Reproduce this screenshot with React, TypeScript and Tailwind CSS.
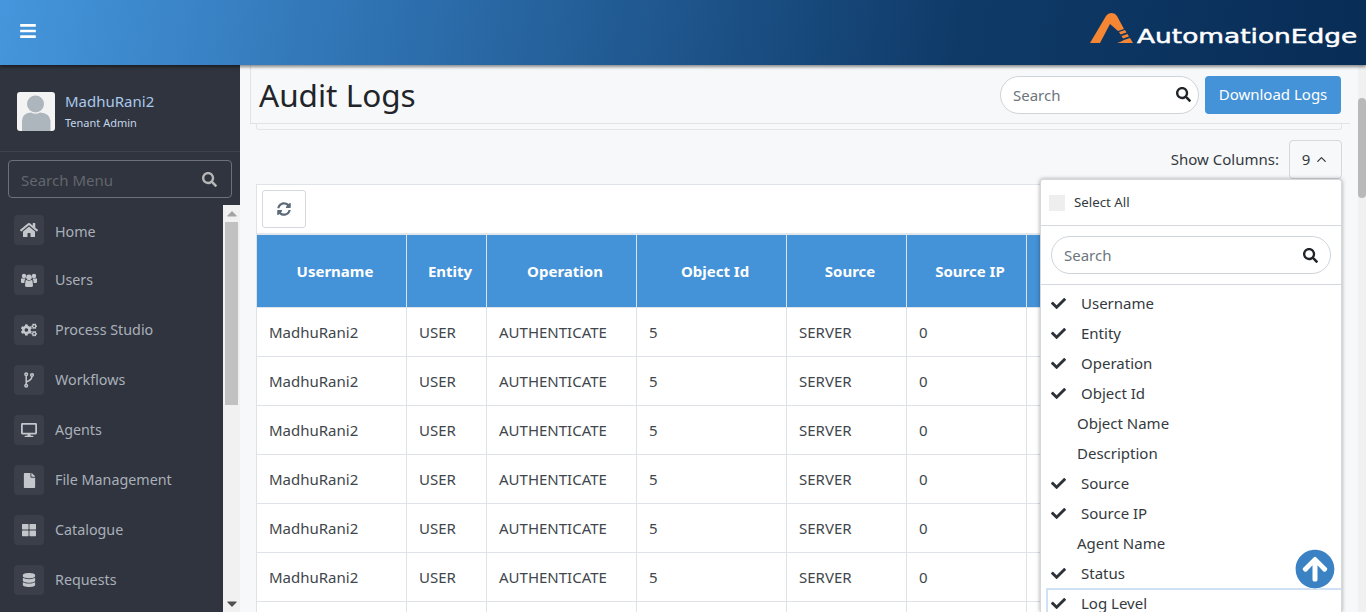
import React from "react";
import { FaHome, FaCogs, FaDesktop, FaFile, FaThLarge, FaDatabase, FaSearch, FaCheck, FaSyncAlt, FaBars, FaArrowCircleUp, FaCaretUp, FaCaretDown } from "react-icons/fa";
import { FiChevronUp } from "react-icons/fi";

const font = { fontFamily: '"Noto Sans", "Open Sans", sans-serif' };

function UsersIcon({ className }: { className?: string }) {
  return (
    <svg viewBox="0 0 16 14" width="16" height="14" className={className} fill="currentColor">
      <circle cx="3" cy="3" r="2.2" />
      <circle cx="13" cy="3" r="2.2" />
      <path d="M0 6 Q0 5 1.5 5.4 L4.5 5.4 Q3 8 3.5 10 L1 10 Q0 10 0 9 Z" />
      <path d="M16 6 Q16 5 14.5 5.4 L11.5 5.4 Q13 8 12.5 10 L15 10 Q16 10 16 9 Z" />
      <circle cx="8" cy="4.2" r="2.8" />
      <path d="M4.5 8 Q4.5 7 5.5 7 Q8 8.6 10.5 7 Q11.5 7 11.5 8 L12 12.5 Q12 14 10 14 L6 14 Q4 14 4 12.5 Z" />
    </svg>
  );
}

function BranchIcon({ className }: { className?: string }) {
  return (
    <svg viewBox="0 0 10 16" width="10" height="16" className={className} fill="none" stroke="currentColor" strokeWidth="1.5">
      <circle cx="2.2" cy="2.2" r="1.3" />
      <circle cx="2.2" cy="13.8" r="1.3" />
      <circle cx="8" cy="3" r="1.3" />
      <path d="M2.2 3.5 V12.5 M8 4.3 Q8 8 2.2 10" />
    </svg>
  );
}

const menu: [string, React.ComponentType<{ className?: string }>, string][] = [
  ["Home", FaHome, "text-[18px]"],
  ["Users", UsersIcon, ""],
  ["Process Studio", FaCogs, "text-[16px]"],
  ["Workflows", BranchIcon, ""],
  ["Agents", FaDesktop, "text-[16px]"],
  ["File Management", FaFile, "text-[15px]"],
  ["Catalogue", FaThLarge, "text-[14px]"],
  ["Requests", FaDatabase, "text-[14px]"],
];

const cols: [string, string][] = [
  ["Username", "w-[150px]"],
  ["Entity", "w-[80px]"],
  ["Operation", "w-[150px]"],
  ["Object Id", "w-[150px]"],
  ["Source", "w-[120px]"],
  ["Source IP", "w-[120px]"],
  ["", "flex-1"],
];

const row = ["MadhuRani2", "USER", "AUTHENTICATE", "5", "SERVER", "0", ""];

const items: [string, boolean][] = [
  ["Username", true],
  ["Entity", true],
  ["Operation", true],
  ["Object Id", true],
  ["Object Name", false],
  ["Description", false],
  ["Source", true],
  ["Source IP", true],
  ["Agent Name", false],
  ["Status", true],
  ["Log Level", true],
];

function Logo() {
  return (
    <div className="flex items-end pb-[8px]">
      <svg width="43" height="30" viewBox="0 0 43 30" className="mb-[1px]">
        <path d="M0 30 L16 3 Q18 0 22 0 Q25 0 27 3 L34 16 L28 18 L20 11 L10 30 Z" fill="#f58634" />
        <path d="M29 19 L35 17 L36.5 19.5 L30.5 21.5 Z M31.5 23 L37.5 21 L39 23.5 L33 25.5 Z M34 27 L40 25 L43 30 L27 30 Q31 29 34 27 Z" fill="#f58634" />
      </svg>
      <span className="ml-[4px] w-[219px] inline-block origin-left scale-x-[1.32] text-white text-[20px] leading-[20px] font-normal whitespace-nowrap mb-[-1.5px] [-webkit-text-stroke:0.5px_white]" style={{ fontFamily: '"DejaVu Sans", sans-serif' }}>
        AutomationEdge
      </span>
    </div>
  );
}

function SearchPill({ className }: { className: string }) {
  return (
    <div className={`flex items-center justify-between rounded-full border border-[#ced4da] bg-white pl-3 h-[38px] ${className}`}>
      <span className="text-[15px] text-[#6c757d] pt-[1px]">Search</span>
      <FaSearch className="text-[15px] text-[#212529]" />
    </div>
  );
}

export default function App() {
  return (
    <div className="h-[612px] w-[1366px] overflow-hidden flex flex-col bg-[#f7f8fa] text-[#212529] relative" style={font}>
      <header className="h-[65px] shrink-0 flex items-center justify-between pl-[19px] pr-[10px] shadow-[0_2px_3px_rgba(0,0,0,0.45)] relative z-20 bg-[linear-gradient(100deg,#4596dc_0%,#2d6fae_30%,#0f3a68_70%,#082d56_100%)]">
        <FaBars className="text-white text-[18px] mt-[-4px]" />
        <Logo />
      </header>

      <div className="flex flex-1 min-h-0">
        <aside className="w-[240px] shrink-0 bg-[#30343e] flex flex-col">
          <div className="h-[87px] shrink-0 border-b border-[#3e424c] flex items-center pl-[17px] pt-[6px]">
            <svg viewBox="0 0 38 39" width="38" height="39" className="rounded-[3px] bg-[#f3f3f3]">
              <circle cx="18.5" cy="12" r="8.5" fill="#adb5bd" />
              <path d="M5 39 V29 Q5 21 14 20.5 Q18.5 23 23 20.5 Q33 21 33.5 29 V39 Z" fill="#adb5bd" />
            </svg>
            <div className="ml-[10px]">
              <div className="text-[15px] leading-[20px] text-[#a9c8ea]">MadhuRani2</div>
              <div className="text-[11px] leading-[18px] mt-[3px] text-[#c3d6ea]">Tenant Admin</div>
            </div>
          </div>
          <div className="mx-[8px] mt-[8px] h-[38px] shrink-0 rounded-[4px] border border-[#6c7078] flex items-center justify-between pl-[12px] pr-[14px]">
            <span className="text-[15px] text-[#62666e] pt-[2px]">Search Menu</span>
            <FaSearch className="text-[15px] text-[#b7b7b7]" />
          </div>
          <div className="flex flex-1 min-h-0 mt-[7px]">
            <nav className="flex-1 overflow-hidden pl-[14px] pt-[10px]">
              {menu.map(([label, Icon, size]) => (
                <div key={label} className="h-[30px] mb-[20px] flex items-center">
                  <div className="w-[30px] h-[30px] rounded-[4px] bg-[#3b3f49] flex items-center justify-center">
                    <Icon className={`${size} text-[#c3c6cb]`} />
                  </div>
                  <span className={`ml-[11px] text-[14.3px] text-[#a9b0ba] ${label === "Home" ? "pt-[3px]" : ""}`}>{label}</span>
                </div>
              ))}
            </nav>
            <div className="w-[17px] shrink-0 bg-[#f1f1f1] flex flex-col items-center">
              <FaCaretUp className="text-[10px] text-[#a3a3a3] h-[17px]" />
              <div className="w-[13px] h-[183px] bg-[#c1c1c1]" />
              <div className="flex-1" />
              <FaCaretDown className="text-[10px] text-[#505050] h-[17px]" />
            </div>
          </div>
        </aside>

        <main className="flex-1 min-w-0 flex flex-col pl-[10px] pr-[16px]">
          <div className="h-[59px] shrink-0 border-b border-l border-[#dfe2e6] flex items-center justify-between pl-[8px] pr-[9px] pt-[1px] relative z-10 bg-[#f7f8fa]">
            <h1 className="text-[31.5px] font-normal leading-[38px] mt-[1px]">Audit Logs</h1>
            <div className="flex items-center gap-[6px]">
              <SearchPill className="w-[199px] pr-[7px]" />
              <button className="h-[38px] w-[136px] rounded-[4px] bg-[#4492d7] text-white text-[15px]">Download Logs</button>
            </div>
          </div>
          <div className="h-[6px] shrink-0 mx-[6px] mr-[8px] border-x border-b border-[#e4e6ea] rounded-b-[3px]" />
          <div className="h-[49px] shrink-0 flex items-center justify-end gap-[10px] pr-[8px] pt-[9px]">
            <span className="text-[15px] text-[#343a40]">Show Columns:</span>
            <div className="w-[53px] h-[39px] rounded-[4px] border border-[#d5d8dc] flex items-center justify-center gap-[4px] text-[15px] text-[#343a40]">
              9 <FiChevronUp className="text-[15px]" />
            </div>
          </div>
          <div className="ml-[6px] mr-[9px] mt-[5px] flex-1 min-h-0 bg-white border border-[#dfe2e6] border-b-0 overflow-hidden">
            <div className="h-[50px] flex items-start pt-[5px] pl-[5px] border-b-[2px] border-[#e4e6ea]">
              <div className="w-[44px] h-[38px] rounded-[3px] border border-[#d5d8dc] flex items-center justify-center">
                <FaSyncAlt className="text-[14px] text-[#5c6b7a]" />
              </div>
            </div>
            <div className="flex h-[73px] bg-[#4492d7] border-b border-[#dfe2e6]">
              {cols.map(([c, w], i) => (
                <div key={i} className={`${w} shrink-0 border-r border-[#dfe2e6] flex items-center justify-center text-white text-[15px] font-bold last:border-r-0`}>
                  <span className="pl-[7px]">{c}</span>
                </div>
              ))}
            </div>
            {Array.from({ length: 6 }).map((_, r) => (
              <div key={r} className="flex h-[49px] border-b border-[#dfe2e6]">
                {row.map((v, i) => (
                  <div key={i} className={`${cols[i][1]} shrink-0 border-r border-[#dfe2e6] flex items-center pl-[12px] text-[15px] text-[#40464c] last:border-r-0`}>
                    {v}
                  </div>
                ))}
              </div>
            ))}
            <div className="flex h-[10px]">
              {cols.map(([, w], i) => (
                <div key={i} className={`${w} shrink-0 border-r border-[#dfe2e6] last:border-r-0`} />
              ))}
            </div>
          </div>
        </main>
      </div>

      {/* page scrollbar */}
      <div className="absolute right-0 top-[65px] bottom-0 w-[8px] bg-[#f1f1f1]">
        <div className="absolute top-[33px] left-0 w-[8px] h-[100px] rounded-full bg-[#b9b9b9]" />
      </div>

      {/* column dropdown */}
      <div className="absolute left-[1040px] top-[179px] w-[302px] h-[433px] bg-white border-x border-t border-[#d5d8dc] rounded-t-[3px] shadow-[0_0_4px_rgba(0,0,0,0.35)] z-10 overflow-hidden">
        <div className="h-[46px] border-b border-[#d5d8dc] flex items-center pl-[8px]">
          <div className="w-[16px] h-[16px] bg-[#eeeeee]" />
          <span className="ml-[9px] text-[13.3px] text-[#343a40] pt-[1px]">Select All</span>
        </div>
        <div className="h-[59px] border-b border-[#d5d8dc] flex items-center px-[10px]">
          <SearchPill className="w-full pr-[12px]" />
        </div>
        <div className="pt-[3px]">
          {items.map(([label, on]) => (
            <div
              key={label}
              className={`h-[30px] flex items-center text-[15px] text-[#343a40] ${label === "Log Level" ? "ml-[5px] border-t-2 border-l-2 border-[#cfe2f5] pl-[3px] pb-[2px]" : "pl-[10px]"}`}
            >
              {on ? (
                <>
                  <FaCheck className="text-[15px] text-[#2d3238] w-[15px]" />
                  <span className="ml-[15px]">{label}</span>
                </>
              ) : (
                <span className="ml-[26px]">{label}</span>
              )}
            </div>
          ))}
        </div>
      </div>

      <FaArrowCircleUp className="absolute left-[1295px] top-[549px] text-[40px] text-[#3b82c4] z-30 bg-white rounded-full" />
    </div>
  );
}
